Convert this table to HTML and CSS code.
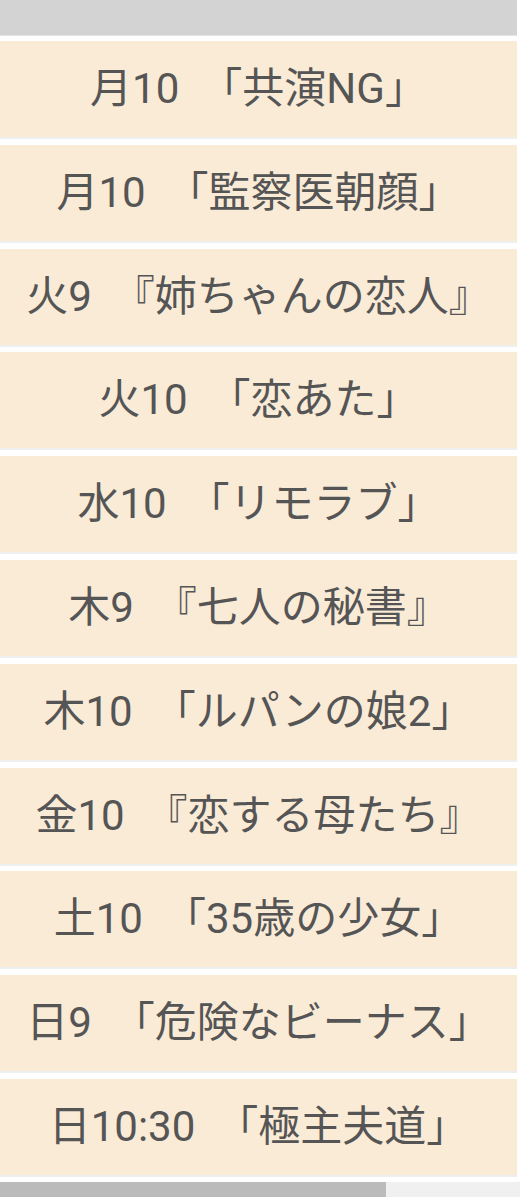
FILE: index.html
```html
<!DOCTYPE html>
<html lang="ja">
<head>
<meta charset="utf-8">
<link rel="stylesheet" href="styles.css">
</head>
<body>
<div class="page">
  <div class="topbar"></div>
  <ul class="list">
    <li class="item">月10<span class="ob">「</span>共演NG」</li>
    <li class="item">月10<span class="ob">「</span>監察医朝顔」</li>
    <li class="item">火9<span class="ob">『</span>姉ちゃんの恋人』</li>
    <li class="item">火10<span class="ob">「</span>恋あた」</li>
    <li class="item">水10<span class="ob">「</span>リモラブ」</li>
    <li class="item">木9<span class="ob">『</span>七人の秘書』</li>
    <li class="item">木10<span class="ob">「</span>ルパンの娘2」</li>
    <li class="item">金10<span class="ob">『</span>恋する母たち』</li>
    <li class="item">土10<span class="ob">「</span>35歳の少女」</li>
    <li class="item">日9<span class="ob">「</span>危険なビーナス」</li>
    <li class="item">日10:30<span class="ob">「</span>極主夫道」</li>
  </ul>
  <div class="scrollbar"><div class="thumb"></div></div>
</div>
</body>
</html>
```
FILE: styles.css
```css
html, body {
  margin: 0;
  padding: 0;
  background: #ffffff;
}
.page {
  width: 520px;
  font-family: Roboto, "Noto Sans CJK JP", sans-serif;
  color: #555555;
}
.topbar {
  width: 517px;
  height: 35px;
  background: #d3d3d3;
  border-bottom: 1px solid #e4e4e4;
  margin-bottom: 5px;
}
.list {
  list-style: none;
  margin: 0;
  padding: 0;
  width: 517px;
  display: flex;
  flex-direction: column;
  gap: 5.8px;
}
.item {
  height: 96px;
  background: #faebd7;
  border-bottom: 2px solid #efefef;
  display: flex;
  align-items: center;
  justify-content: center;
  font-size: 42px;
  line-height: 1;
  white-space: nowrap;
}
.ob {
  margin-left: 0.5em;
}
.scrollbar {
  margin-top: 5px;
  width: 520px;
  height: 15px;
  background: #f0f0f0;
}
.thumb {
  width: 386px;
  height: 15px;
  background: #bbbbbb;
}
```
